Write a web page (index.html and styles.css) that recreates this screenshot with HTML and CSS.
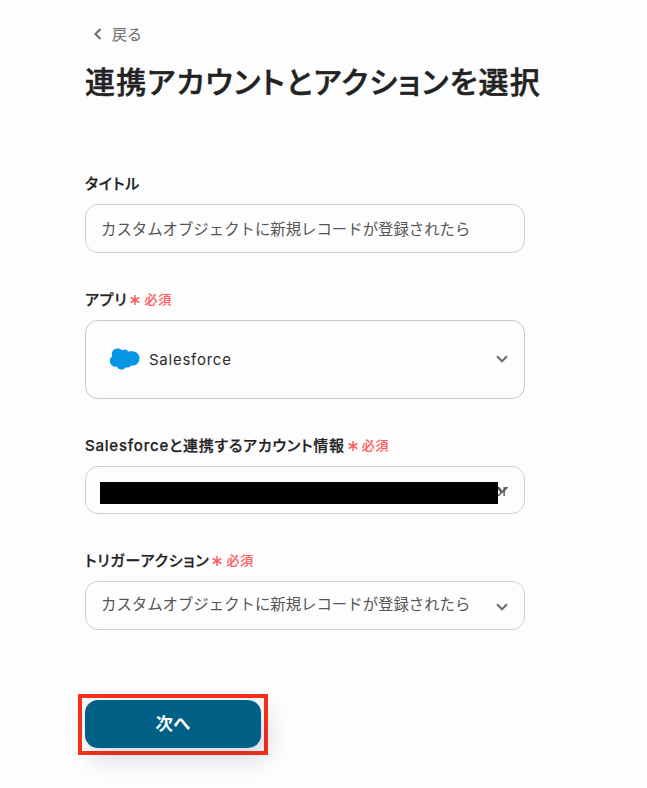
FILE: index.html
```html
<!DOCTYPE html>
<html lang="ja">
<head>
    <meta charset="UTF-8">
    <meta name="viewport" content="width=device-width, initial-scale=1.0">
    <title>連携アカウントとアクションを選択</title>
    <link rel="stylesheet" href="styles.css">
</head>
<body>

<main class="container">
    <a class="back-link">
        <svg class="back-icon" viewBox="0 0 8 12"><path d="M6.5 1 L1.5 6 L6.5 11"/></svg>
        <span>戻る</span>
    </a>

    <h1>連携アカウントとアクションを選択</h1>

    <!-- Title -->
    <div class="field">
        <div class="label">タイトル</div>
        <div class="input-field"><span class="input-text">カスタムオブジェクトに新規レコードが登録されたら</span></div>
    </div>

    <!-- App -->
    <div class="field field-app">
        <div class="label">アプリ
            <span class="required"><svg class="asterisk" viewBox="0 0 10 10"><path d="M5 0V10M.7 2.5L9.3 7.5M9.3 2.5L.7 7.5"/></svg>必須</span>
        </div>
        <div class="input-field app-field">
            <svg class="app-logo" viewBox="0 0 30 22">
                <path d="M12.5 2.2C14.5 .9 17.5 1.2 19 3.6C24 2 30 4.6 30 10C30 15.5 26 18.2 21.8 17.4C20.4 19.2 18 19.8 16.2 19.2C14.5 22.4 8.6 22.6 7.2 18.6C3.6 19 .8 17 .4 13.4C.2 11.4 .8 9.6 2.6 8.5C1.6 4 3.8 .5 7.8 .4C9.7 .4 11.4 .8 12.5 2.2Z"/>
            </svg>
            <span class="app-name">Salesforce</span>
            <svg class="chevron" viewBox="0 0 12 8"><path d="M1 1.2L6 6.2L11 1.2"/></svg>
        </div>
    </div>

    <!-- Account -->
    <div class="field field-account">
        <div class="label">Salesforceと連携するアカウント情報
            <span class="required"><svg class="asterisk" viewBox="0 0 10 10"><path d="M5 0V10M.7 2.5L9.3 7.5M9.3 2.5L.7 7.5"/></svg>必須</span>
        </div>
        <div class="input-field account-field">
            <span class="account-text">or</span>
            <svg class="chevron" viewBox="0 0 12 8"><path d="M1 1.2L6 6.2L11 1.2"/></svg>
            <div class="mask"></div>
        </div>
    </div>

    <!-- Trigger action -->
    <div class="field field-trigger">
        <div class="label">トリガーアクション
            <span class="required"><svg class="asterisk" viewBox="0 0 10 10"><path d="M5 0V10M.7 2.5L9.3 7.5M9.3 2.5L.7 7.5"/></svg>必須</span>
        </div>
        <div class="input-field trigger-field">
            <span class="input-text">カスタムオブジェクトに新規レコードが登録されたら</span>
            <svg class="chevron" viewBox="0 0 12 8"><path d="M1 1.2L6 6.2L11 1.2"/></svg>
        </div>
    </div>

    <div class="highlight">
        <button class="button">次へ</button>
    </div>
</main>

</body>
</html>
```
FILE: styles.css
```css
* {
    box-sizing: border-box;
}

body {
    margin: 0;
    background-color: #fdfdfe;
    color: #222;
    font-family: Inter, "Noto Sans CJK JP", sans-serif;
}

.container {
    width: 440px;
    min-height: 788px;
    margin-left: 85px;
    padding-top: 22px;
}

.back-link {
    display: flex;
    align-items: center;
    gap: 10px;
    height: 24px;
    padding-left: 9px;
    color: #777;
    font-size: 15px;
    -webkit-text-stroke: 0.2px #777;
}

.back-link span {
    padding-bottom: 2px;
}

.back-icon {
    width: 8px;
    height: 12px;
}

.back-icon path,
.chevron path {
    fill: none;
    stroke: #707070;
    stroke-width: 2.2;
}

h1 {
    margin: 12px 0 0;
    height: 48px;
    line-height: 48px;
    font-size: 30px;
    font-weight: 500;
    font-feature-settings: "palt";
    letter-spacing: 0.04em;
    white-space: nowrap;
    -webkit-text-stroke: 0.5px #222;
}

.field {
    margin-top: 66px;
}

.label {
    display: flex;
    align-items: center;
    height: 20px;
    margin-bottom: 12px;
    font-size: 15px;
    font-weight: 500;
    font-feature-settings: "palt";
    letter-spacing: 0.052em;
    white-space: nowrap;
    -webkit-text-stroke: 0.25px #222;
}

.required {
    display: flex;
    align-items: center;
    gap: 4px;
    margin-left: 3px;
    color: #ff5c60;
    font-size: 13px;
    -webkit-text-stroke: 0.12px #ff5c60;
}

.asterisk {
    width: 10px;
    height: 10px;
    margin-top: 4px;
}

.asterisk path {
    stroke: #ff5c60;
    stroke-width: 1.5;
}

.input-field {
    display: flex;
    align-items: center;
    height: 49px;
    padding: 0 16px 0 15px;
    border: 1px solid #cfd0dc;
    border-radius: 13px;
    color: #555;
    font-size: 15.4px;
    white-space: nowrap;
}

.input-text {
    padding-bottom: 2px;
}

.chevron {
    width: 12px;
    height: 8px;
    margin-left: auto;
}

.field-app {
    margin-top: 35px;
}

.app-field {
    height: 79px;
    padding: 0 16px 1px 23px;
    border-color: #c8c8ca;
}

.app-logo {
    width: 31px;
    height: 22px;
    fill: #0795e6;
}

.app-name {
    margin-left: 9px;
    padding-top: 1px;
    color: #2b2b2b;
    font-size: 15px;
    letter-spacing: 0.05em;
}

.field-account {
    margin-top: 35px;
}

.account-field {
    position: relative;
    height: 48px;
}

.account-text {
    position: absolute;
    right: 16px;
}

/* Covers the account name */
.mask {
    position: absolute;
    left: 14px;
    top: 15px;
    width: 398px;
    height: 22px;
    background-color: #000;
}

.field-trigger {
    margin-top: 35px;
}

.trigger-field .input-text {
    padding-bottom: 5px;
}

.trigger-field .chevron {
    margin-top: 3px;
}

/* Red frame around the button */
.highlight {
    width: 190px;
    height: 61px;
    margin: 64px 0 0 -7px;
    padding: 2px 3px;
    border: 4px solid #fc2f17;
}

.button {
    display: block;
    width: 176px;
    height: 48px;
    padding: 0 0 3px;
    border: none;
    border-radius: 13px;
    background-color: #006085;
    box-shadow: 6px 10px 24px rgba(40, 40, 90, 0.18);
    color: #fff;
    font-family: inherit;
    font-size: 17.5px;
    font-weight: 600;
}
```
